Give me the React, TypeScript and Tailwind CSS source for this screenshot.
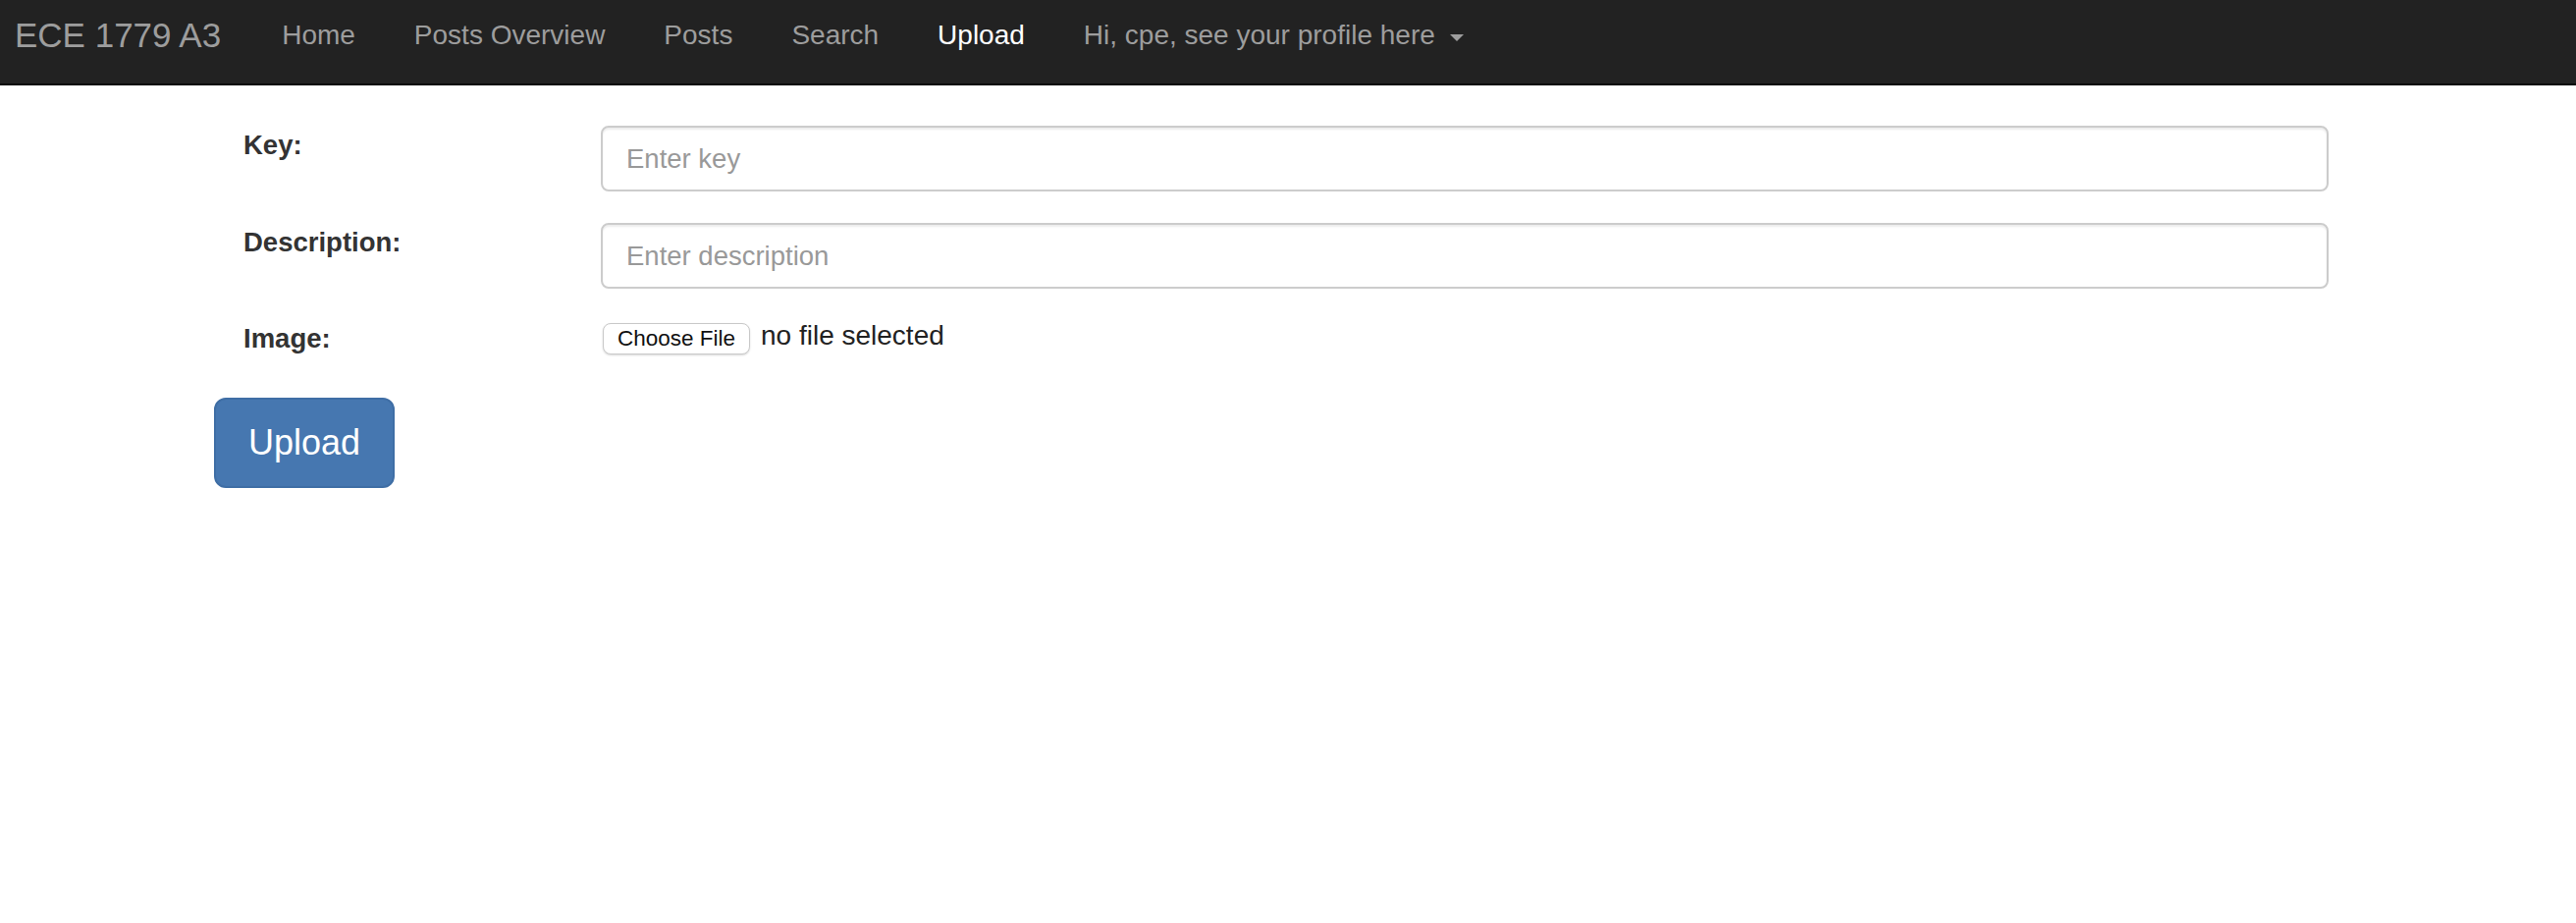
const links = [
  { label: 'Home' },
  { label: 'Posts Overview' },
  { label: 'Posts' },
  { label: 'Search' },
  { label: 'Upload', active: true },
]

function Navbar() {
  return (
    <nav className="h-[87px] bg-[#222] border-b-2 border-[#080808]">
      <div className="flex items-center h-[72px]">
        <a className="pl-[15px] pr-[32px] text-[35px] leading-[40px] text-[#9d9d9d]">ECE 1779 A3</a>
        <ul className="flex items-center">
          {links.map((l) => (
            <li key={l.label}>
              <a
                className={`block px-[30px] text-[28px] leading-[40px] ${l.active ? 'text-white' : 'text-[#9d9d9d]'}`}
              >
                {l.label}
              </a>
            </li>
          ))}
          <li>
            <a className="flex items-center px-[30px] text-[28px] leading-[40px] text-[#9d9d9d]">
              Hi, cpe, see your profile here
              <span className="ml-[15px] mt-[4px] w-0 h-0 border-t-[7px] border-t-[#9d9d9d] border-x-[7px] border-x-transparent" />
            </a>
          </li>
        </ul>
      </div>
    </nav>
  )
}

function TextRow({ label, placeholder, className = '' }: { label: string; placeholder: string; className?: string }) {
  return (
    <div className={`flex items-start ${className}`}>
      <label className="w-[394px] pl-[30px] text-[27.5px] leading-[40px] font-bold text-[#333]">{label}</label>
      <input
        type="text"
        placeholder={placeholder}
        className="w-[1760px] h-[67px] border-2 border-[#ccc] rounded-[8px] px-[24px] text-[27.5px] text-[#555] placeholder:text-[#999] bg-white shadow-[inset_0_2px_2px_rgba(0,0,0,0.075)] outline-none"
      />
    </div>
  )
}

export default function App() {
  return (
    <div className="min-h-screen bg-white font-['Liberation_Sans',Arial,sans-serif]">
      <Navbar />

      {/* upload form */}
      <main className="pl-[218px] pt-[41px]">
        <TextRow label="Key:" placeholder="Enter key" />
        <TextRow label="Description:" placeholder="Enter description" className="mt-[32px]" />

        <div className="flex items-start mt-[31px]">
          <label className="w-[394px] pl-[30px] text-[27.5px] leading-[40px] font-bold text-[#333]">Image:</label>
          <div className="flex items-start pt-[4px] pl-[2px]">
            <button
              type="button"
              className="w-[150px] h-[32px] border border-[#c9c9c9] rounded-[8px] bg-white shadow-[0_1px_2px_rgba(0,0,0,0.15)] text-[22.5px] leading-[30px] text-[#111]"
            >
              Choose File
            </button>
            <span className="ml-[11px] mt-[-3px] text-[28px] leading-[32px] text-[#222]">no file selected</span>
          </div>
        </div>

        <button
          type="button"
          className="mt-[40px] w-[184px] h-[92px] bg-[#4677b0] border-2 border-[#3f6ea5] rounded-[12px] text-[36px] text-white"
        >
          Upload
        </button>
      </main>
    </div>
  )
}
